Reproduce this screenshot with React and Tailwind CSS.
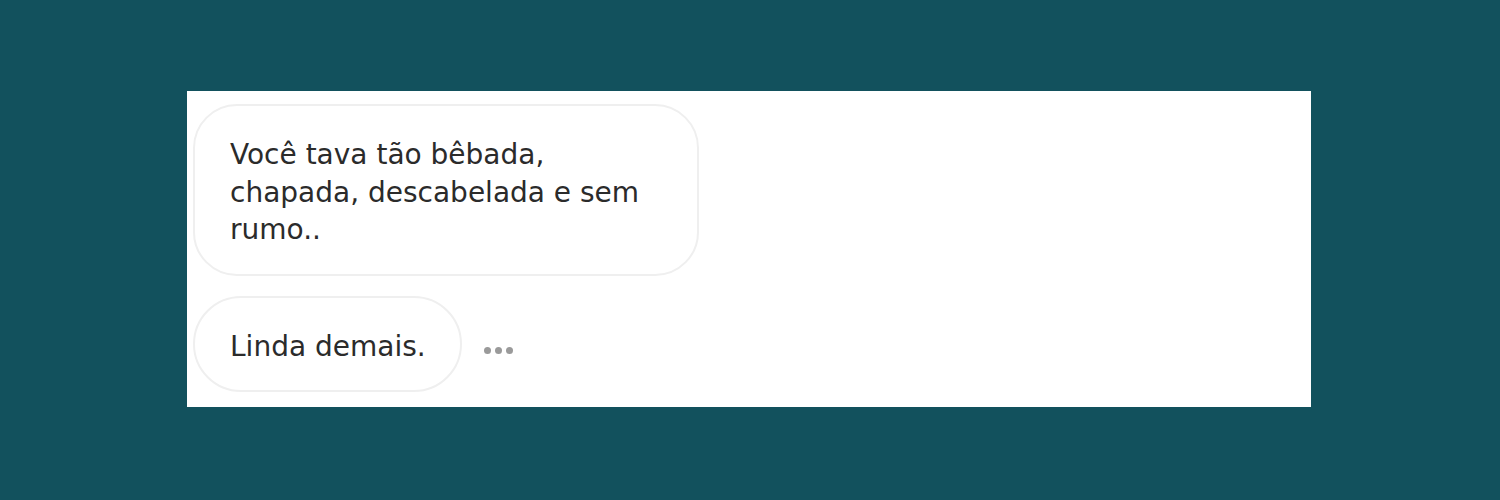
export default function App() {
  return (
    <div className="w-[1500px] h-[500px] bg-[#12515d] pt-[91px] pl-[187px]">
      <div
        className="w-[1124px] h-[316px] bg-white pt-[13px] pl-[6px] flex flex-col items-start gap-[20px] text-[#2b2b2b]"
        style={{ fontFamily: '"DejaVu Sans", Verdana, sans-serif' }}
      >
        {/* first message */}
        <div className="w-[506px] border-2 border-[#efefef] rounded-[44px] pl-[35px] pr-[32px] pt-[30px] pb-[25px] text-[28px] leading-[37.5px]">
          Você tava tão bêbada, chapada, descabelada e sem rumo..
        </div>
        {/* second message with typing dots */}
        <div className="flex items-center gap-[22px]">
          <div className="border-2 border-[#efefef] rounded-full pl-[35px] pr-[34px] pt-[30px] pb-[25px] text-[28px] leading-[37.5px] whitespace-nowrap">
            Linda demais.
          </div>
          <div className="flex gap-[4px] mt-[14px]">
            <span className="w-[7px] h-[7px] rounded-full bg-[#9a9a9a]" />
            <span className="w-[7px] h-[7px] rounded-full bg-[#9a9a9a]" />
            <span className="w-[7px] h-[7px] rounded-full bg-[#9a9a9a]" />
          </div>
        </div>
      </div>
    </div>
  );
}
